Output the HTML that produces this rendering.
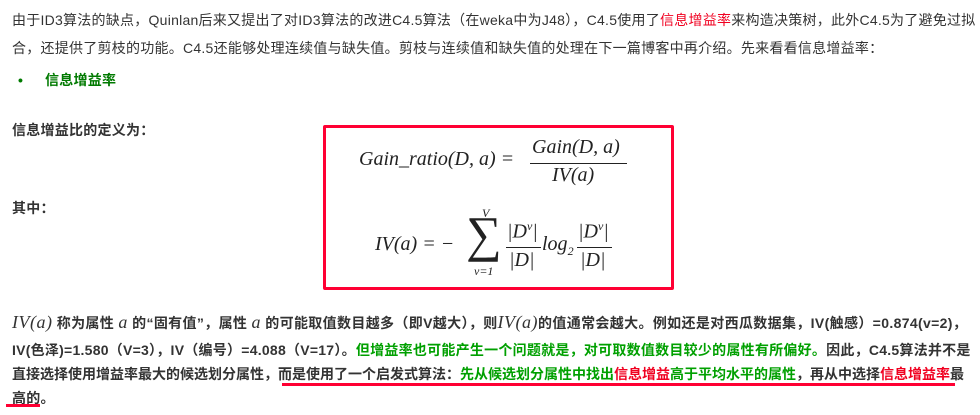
<!DOCTYPE html>
<html><head><meta charset="utf-8"><style>
body{margin:0;width:980px;height:415px;background:#fff;position:relative;overflow:hidden;font-family:"Liberation Sans","Noto Sans CJK SC",sans-serif;font-size:14px;color:#333}
.l{position:absolute;left:12px;white-space:nowrap;line-height:20px;letter-spacing:0.25px}
.b{font-weight:bold}
.r{color:#f00020}.g{color:#00a000}.dg{color:#007a00}
.m{font-family:"Liberation Serif","DejaVu Serif",serif;font-style:italic;color:#222;position:absolute;white-space:nowrap}
.box{position:absolute;left:323px;top:125px;width:345px;height:159px;border:3px solid #ff0033;border-radius:2px}
.ul{position:absolute;background:#ff0033;height:3px}
.mi{font-family:"Liberation Serif",serif;font-style:italic;font-size:18px;font-weight:normal;letter-spacing:0.5px}
</style></head><body>
<div class="l" style="top:10px">由于ID3算法的缺点，Quinlan后来又提出了对ID3算法的改进C4.5算法（在weka中为J48），C4.5使用了<span class="r">信息增益率</span>来构造决策树，此外C4.5为了避免过拟</div>
<div class="l" style="top:38px">合，还提供了剪枝的功能。C4.5还能够处理连续值与缺失值。剪枝与连续值和缺失值的处理在下一篇博客中再介绍。先来看看信息增益率：</div>
<div class="l b dg" style="top:70px;left:18px">•</div>
<div class="l b dg" style="top:70px;left:45px">信息增益率</div>
<div class="l b" style="top:120px">信息增益比的定义为：</div>
<div class="l b" style="top:198px">其中：</div>
<div class="box"></div>
<div class="m" style="left:359px;top:148px;font-size:20px">Gain_ratio(D, a) = </div>
<div class="m" style="left:532px;top:136px;font-size:20px">Gain(D, a)</div>
<div style="position:absolute;left:530px;top:163px;width:97px;height:1px;background:#222"></div>
<div class="m" style="left:552px;top:164px;font-size:20px">IV(a)</div>
<div class="m" style="left:375px;top:233px;font-size:20px">IV(a) = −</div>
<div class="m" style="left:466px;top:209px;font-size:50px;font-style:normal;line-height:50px">∑</div>
<div class="m" style="left:482px;top:206px;font-size:12px">V</div>
<div class="m" style="left:474px;top:264px;font-size:12px">v=1</div>
<div class="m" style="left:507px;top:219px;font-size:20px">|D<sup style="font-size:12px">v</sup>|</div>
<div style="position:absolute;left:506px;top:247px;width:35px;height:1px;background:#222"></div>
<div class="m" style="left:509px;top:249px;font-size:20px">|D|</div>
<div class="m" style="left:542px;top:233px;font-size:20px">log<sub style="font-size:12px">2</sub></div>
<div class="m" style="left:578px;top:219px;font-size:20px">|D<sup style="font-size:12px">v</sup>|</div>
<div style="position:absolute;left:577px;top:247px;width:35px;height:1px;background:#222"></div>
<div class="m" style="left:580px;top:249px;font-size:20px">|D|</div>
<div class="l b" style="top:312px;letter-spacing:0.35px"><span class="mi">IV(a)</span> 称为属性 <span class="mi">a</span> 的“固有值”，属性 <span class="mi">a</span> 的可能取值数目越多（即V越大），则<span class="mi">IV(a)</span>的值通常会越大。例如还是对西瓜数据集，IV(触感）=0.874(v=2)，</div>
<div class="l b" style="top:340px">IV(色泽)=1.580（V=3），IV（编号）=4.088（V=17）。<span class="g">但增益率也可能产生一个问题就是，对可取数值数目较少的属性有所偏好。</span>因此，C4.5算法并不是</div>
<div class="l b" style="top:364px;letter-spacing:0">直接选择使用增益率最大的候选划分属性，而是使用了一个启发式算法：<span class="g">先从候选划分属性中找出<span class="r">信息增益</span>高于平均水平的属性</span>，再从中选择<span class="r">信息增益率</span>最</div>
<div class="l b" style="top:388px">高的。</div>
<div class="ul" style="left:282px;top:383px;width:673px"></div>
<div class="ul" style="left:6px;top:404px;width:34px"></div>
</body></html>
